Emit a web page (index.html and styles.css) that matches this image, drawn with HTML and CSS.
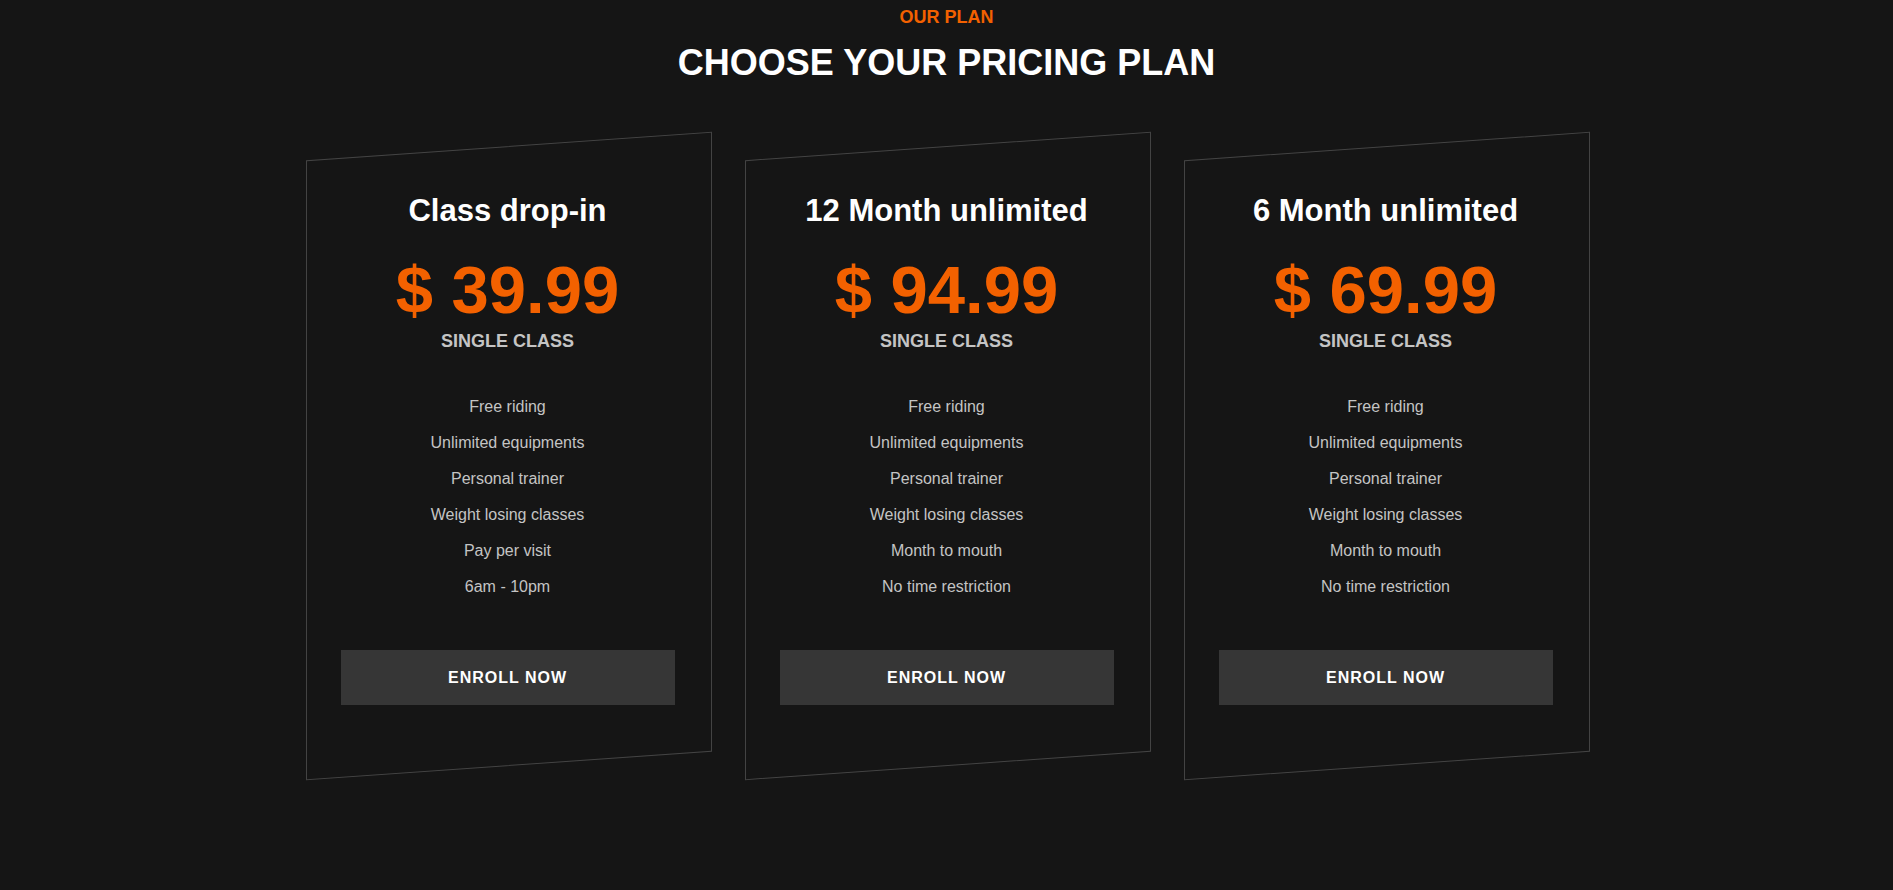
FILE: index.html
```html
<!DOCTYPE html>
<html lang="en">
<head>
<meta charset="utf-8">
<title>Pricing Plan</title>
<link rel="stylesheet" href="styles.css">
</head>
<body>
<section class="pricing">
  <div class="section-title">
    <span class="eyebrow">OUR PLAN</span>
    <h2 class="heading">CHOOSE YOUR PRICING PLAN</h2>
  </div>
  <div class="cards">
    <div class="ps-item">
      <h3 class="plan-name">Class drop-in</h3>
      <div class="price">$ 39.99</div>
      <span class="price-note">SINGLE CLASS</span>
      <ul class="features">
        <li>Free riding</li>
        <li>Unlimited equipments</li>
        <li>Personal trainer</li>
        <li>Weight losing classes</li>
        <li>Pay per visit</li>
        <li>6am - 10pm</li>
      </ul>
      <a class="enroll" href="#">ENROLL NOW</a>
    </div>
    <div class="ps-item">
      <h3 class="plan-name">12 Month unlimited</h3>
      <div class="price">$ 94.99</div>
      <span class="price-note">SINGLE CLASS</span>
      <ul class="features">
        <li>Free riding</li>
        <li>Unlimited equipments</li>
        <li>Personal trainer</li>
        <li>Weight losing classes</li>
        <li>Month to mouth</li>
        <li>No time restriction</li>
      </ul>
      <a class="enroll" href="#">ENROLL NOW</a>
    </div>
    <div class="ps-item">
      <h3 class="plan-name">6 Month unlimited</h3>
      <div class="price">$ 69.99</div>
      <span class="price-note">SINGLE CLASS</span>
      <ul class="features">
        <li>Free riding</li>
        <li>Unlimited equipments</li>
        <li>Personal trainer</li>
        <li>Weight losing classes</li>
        <li>Month to mouth</li>
        <li>No time restriction</li>
      </ul>
      <a class="enroll" href="#">ENROLL NOW</a>
    </div>
  </div>
</section>
</body>
</html>
```
FILE: styles.css
```css
* { box-sizing: border-box; }
html, body {
  margin: 0;
  padding: 0;
  background: #151515;
  height: 100%;
}
body {
  font-family: "Liberation Sans", Arial, sans-serif;
  color: #c4c4c4;
  overflow: hidden;
}
.pricing {
  padding-top: 8px;
}
.section-title {
  display: flex;
  flex-direction: column;
  align-items: center;
}
.eyebrow {
  display: block;
  color: #f36100;
  font-size: 18px;
  line-height: 18px;
  font-weight: 700;
}
.heading {
  margin: 15px 0 0;
  color: #ffffff;
  font-size: 36px;
  line-height: 43px;
  font-weight: 700;
}
.cards {
  display: flex;
  justify-content: center;
  gap: 35px;
  margin-top: 62px;
}
.ps-item {
  position: relative;
  width: 404px;
  height: 618px;
  padding: 46px 35px 0;
  text-align: center;
  display: flex;
  flex-direction: column;
  align-items: stretch;
}
.ps-item::after {
  content: "";
  position: absolute;
  left: 0;
  top: 0;
  width: 100%;
  height: 100%;
  border: 1px solid rgba(255, 255, 255, 0.2);
  transform: skewY(-4deg);
  pointer-events: none;
}
.plan-name {
  margin: 0;
  color: #ffffff;
  font-size: 31px;
  line-height: 37px;
  font-weight: 700;
}
.price {
  margin-top: 27px;
  color: #f36100;
  font-size: 67px;
  line-height: 68px;
  font-weight: 700;
}
.price-note {
  display: block;
  margin-top: 8px;
  color: #c4c4c4;
  font-size: 18px;
  line-height: 18px;
  font-weight: 700;
}
.features {
  list-style: none;
  margin: 39px 0 0;
  padding: 0;
}
.features li {
  font-size: 16px;
  line-height: 36px;
  color: #c4c4c4;
}
.enroll {
  display: block;
  margin-top: 45px;
  height: 55px;
  line-height: 55px;
  background: #363636;
  color: #ffffff;
  font-size: 16px;
  font-weight: 700;
  letter-spacing: 1px;
  text-decoration: none;
}
```
